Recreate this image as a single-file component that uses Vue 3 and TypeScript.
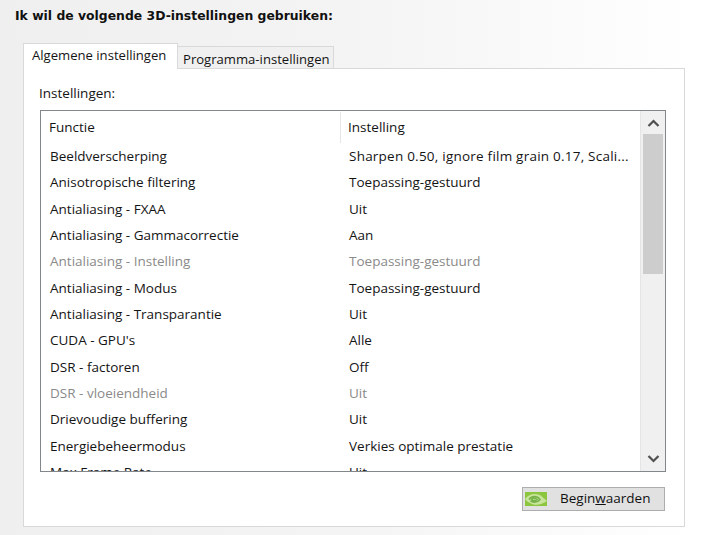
<script setup lang="ts">
interface Row { name: string; value: string; off?: boolean; wide?: boolean }
const rows: Row[] = [
  { name: 'Beeldverscherping', value: 'Sharpen 0.50, ignore film grain 0.17, Scali...', wide: true },
  { name: 'Anisotropische filtering', value: 'Toepassing-gestuurd' },
  { name: 'Antialiasing - FXAA', value: 'Uit' },
  { name: 'Antialiasing - Gammacorrectie', value: 'Aan' },
  { name: 'Antialiasing - Instelling', value: 'Toepassing-gestuurd', off: true },
  { name: 'Antialiasing - Modus', value: 'Toepassing-gestuurd' },
  { name: 'Antialiasing - Transparantie', value: 'Uit' },
  { name: "CUDA - GPU's", value: 'Alle' },
  { name: 'DSR - factoren', value: 'Off' },
  { name: 'DSR - vloeiendheid', value: 'Uit', off: true },
  { name: 'Drievoudige buffering', value: 'Uit' },
  { name: 'Energiebeheermodus', value: 'Verkies optimale prestatie' },
  { name: 'Max Frame Rate', value: 'Uit' }
]
</script>

<template>
  <main class="page">
    <h1 class="title">Ik wil de volgende 3D-instellingen gebruiken:</h1>
    <div class="tabs">
      <div class="tab active">Algemene instellingen</div>
      <div class="tab">Programma-instellingen</div>
    </div>
    <section class="panel">
      <div class="label">Instellingen:</div>
      <div class="listbox">
        <div class="list">
          <div class="head">
            <div class="hcol first">Functie</div>
            <div class="hcol">Instelling</div>
          </div>
          <div class="rows">
            <div v-for="r in rows" :key="r.name" class="row" :class="{ off: r.off }">
              <span class="c1">{{ r.name }}</span>
              <span class="c2" :class="{ wide: r.wide }">{{ r.value }}</span>
            </div>
          </div>
        </div>
        <div class="scroll">
          <div class="arrow">
            <svg width="13" height="8" viewBox="0 0 13 8"><path d="M1.5 7 L6.5 2 L11.5 7" fill="none" stroke="#505050" stroke-width="2.2" /></svg>
          </div>
          <div class="track"><div class="thumb"></div></div>
          <div class="arrow">
            <svg width="13" height="8" viewBox="0 0 13 8"><path d="M1.5 1 L6.5 6 L11.5 1" fill="none" stroke="#505050" stroke-width="2.2" /></svg>
          </div>
        </div>
      </div>
      <div class="actions">
        <button class="btn" type="button">
          <svg class="logo" width="22" height="14" viewBox="0 0 22 14">
            <rect width="22" height="14" fill="#8cc63f" />
            <path d="M0 7 C4 2 9 1 15 3 L22 9 C17 13 9 14 5 11 C2 10 1 8 0 7 Z" fill="#c8e39a" />
            <path d="M4 7.5 C7 3.5 12 3.5 15 7.5 C12.5 10.5 8 11 5.5 9 C8 9.5 10.5 9 12 7.5 C10 5.5 8 5.5 6.5 7.5 C7.5 8.5 9 8.7 10 8" fill="none" stroke="#76b24a" stroke-width="1.4" />
          </svg>
          <span class="btn-text">Begin<u>w</u>aarden</span>
        </button>
      </div>
    </section>
  </main>
</template>

<style>
html, body { margin: 0; padding: 0; }
</style>

<style scoped>
.page {
  width: 703px;
  height: 535px;
  box-sizing: border-box;
  overflow: hidden;
  padding: 8px 0 0 23px;
  background: linear-gradient(90deg, #efefef 0%, #f4f4f4 50%, #ffffff 100%);
  font-family: "Open Sans", "Noto Sans", sans-serif;
  font-size: 13.5px;
  color: #141414;
}
.title {
  margin: 0 0 0 -8px;
  height: 35px;
  font-family: "DejaVu Sans", sans-serif;
  font-size: 12.4px;
  font-weight: 700;
  line-height: 16px;
  color: #111;
  white-space: nowrap;
}
.tabs { display: flex; align-items: flex-end; height: 26px; position: relative; z-index: 1; margin-bottom: -1px; font-size: 13.1px; }
.tab {
  box-sizing: border-box;
  width: 156px;
  height: 23px;
  padding: 2px 0 0 5px;
  border: 1px solid #d9d9d9;
  border-left: 0;
  background: #f0f0f0;
  line-height: 20px;
  white-space: nowrap;
}
.tab.active {
  width: 155px;
  height: 26px;
  padding: 1px 0 0 8px;
  border: 1px solid #d9d9d9;
  border-bottom: 0;
  background: #fff;
}
.panel {
  box-sizing: border-box;
  width: 662px;
  height: 459px;
  padding: 14px 17px 0 16px;
  background: #fff;
  border: 1px solid #d9d9d9;
}
.label { height: 27px; line-height: 20px; margin-left: -1px; }
.listbox {
  box-sizing: border-box;
  display: flex;
  width: 626px;
  height: 362px;
  border: 1px solid #82878c;
}
.list { flex: 1; min-width: 0; overflow: hidden; padding-top: 1px; }
.head { display: flex; height: 31px; }
.hcol {
  box-sizing: border-box;
  width: 298px;
  padding: 5px 0 0 7px;
  line-height: 20px;
}
.hcol.first { width: 300px; padding-left: 8px; border-right: 1px solid #e5e5e5; }
.rows { display: flex; flex-direction: column; }
.row { display: flex; height: 26.33px; flex-shrink: 0; line-height: 26px; white-space: nowrap; }
.row.off { color: #8a8a8a; }
.c1 { box-sizing: border-box; width: 299px; padding-left: 9px; }
.c2 { box-sizing: border-box; padding-left: 9px; }
.c2.wide { letter-spacing: 0.23px; }
.scroll { width: 25px; display: flex; flex-direction: column; background: #f0f0f0; border-left: 1px solid #e5e5e5; box-sizing: border-box; padding: 1px 2px 1px 2px; flex-shrink: 0; }
.arrow { height: 22px; display: flex; align-items: center; justify-content: center; flex-shrink: 0; }
.track { flex: 1; }
.thumb { height: 140px; background: #cdcdcd; }
.actions { display: flex; justify-content: flex-end; padding: 15px 2px 0 0; }
.btn {
  box-sizing: border-box;
  width: 143px;
  height: 24px;
  display: flex;
  align-items: center;
  padding: 0 0 0 2px;
  gap: 13px;
  background: #e1e1e1;
  border: 1px solid #adadad;
  font: inherit;
  color: #111;
}
.btn-text { margin-bottom: 2px; }
.logo { flex-shrink: 0; }
</style>
